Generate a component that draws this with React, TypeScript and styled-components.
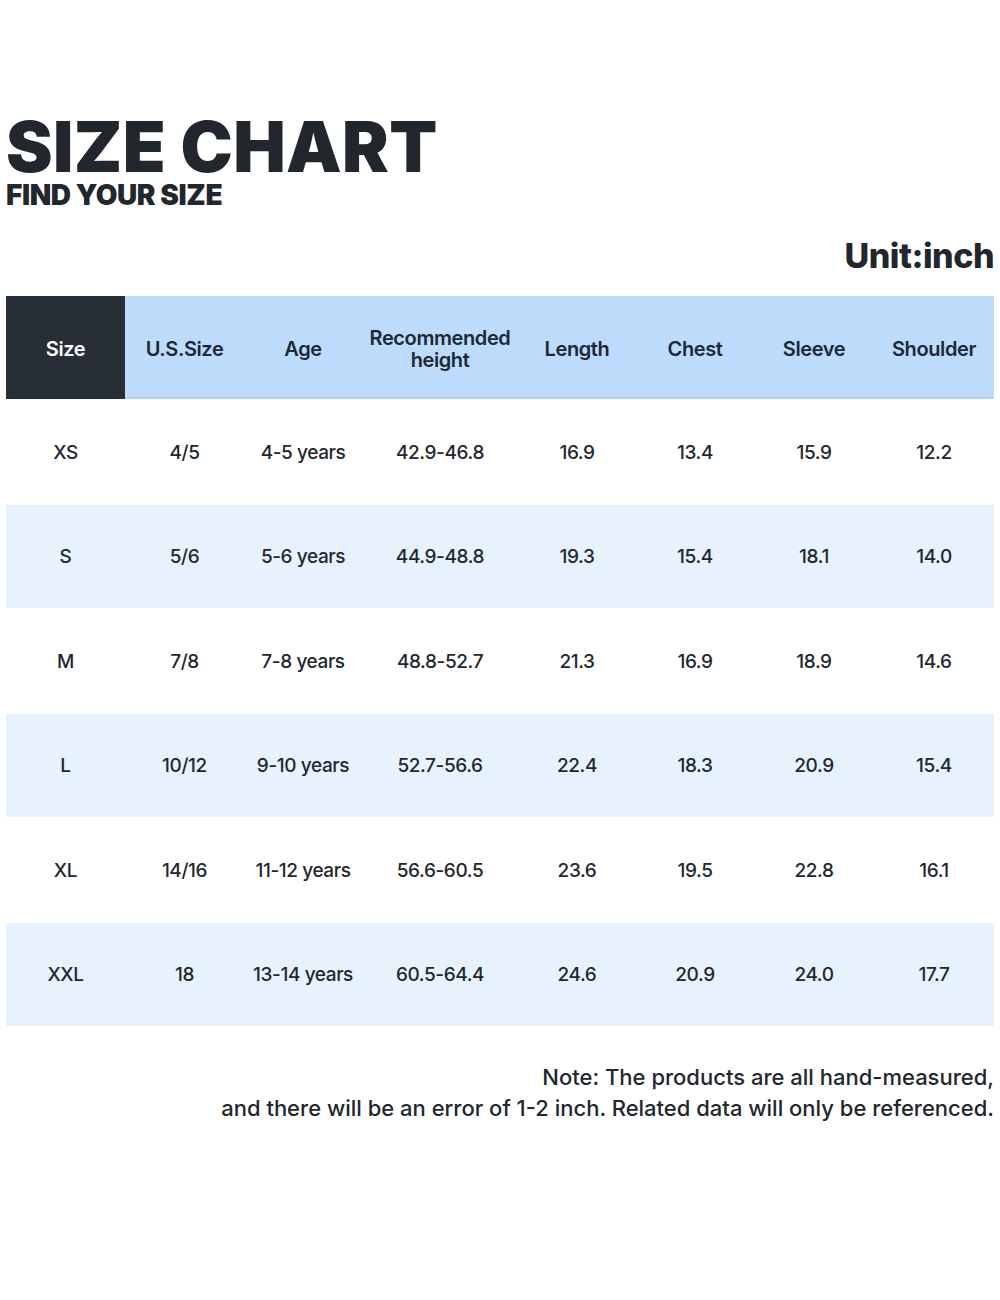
import React from "react";
import styled, { createGlobalStyle } from "styled-components";

const Global = createGlobalStyle`
  html, body { margin: 0; padding: 0; background: #ffffff; }
  body { font-family: Inter, "Noto Sans", sans-serif; color: #22272e; }
`;

const Page = styled.div`
  width: 1000px;
  height: 1300px;
  box-sizing: border-box;
  padding: 115px 6px 0 6px;
  display: flex;
  flex-direction: column;
`;

const Title = styled.h1`
  margin: 0 0 2px 0;
  font-family: Inter, sans-serif;
  font-weight: 900;
  font-size: 70px;
  line-height: 64px;
  letter-spacing: 0.4px;
  color: #22272e;
`;

const Subtitle = styled.h2`
  margin: 0;
  font-family: Inter, sans-serif;
  font-weight: 900;
  font-size: 28px;
  line-height: 28px;
  letter-spacing: -0.4px;
  color: #22272e;
`;

const Unit = styled.div`
  align-self: flex-end;
  margin-top: 27px;
  font-family: Inter, sans-serif;
  font-weight: 800;
  font-size: 34px;
  line-height: 40px;
  letter-spacing: -0.5px;
  color: #22272e;
`;

const Table = styled.div`
  margin-top: 20px;
  display: grid;
  grid-template-columns: 119px 119px 118px 156px 118px 118px 120px 120px;
`;

const HeadCell = styled.div<{ $dark?: boolean }>`
  height: 103px;
  padding-top: 4px;
  display: flex;
  align-items: center;
  justify-content: center;
  text-align: center;
  font-weight: 600;
  font-size: 20px;
  line-height: 22px;
  letter-spacing: -0.4px;
  white-space: pre-line;
  background: ${(p) => (p.$dark ? "#272e36" : "#bddcfb")};
  color: ${(p) => (p.$dark ? "#ffffff" : "#1c2838")};
  border-bottom: 2px solid ${(p) => (p.$dark ? "#272e36" : "#b3d3f3")};
  box-sizing: border-box;
`;

const Cell = styled.div<{ $alt: boolean; $h: number }>`
  height: ${(p) => p.$h}px;
  display: flex;
  align-items: center;
  justify-content: center;
  font-weight: 550;
  font-size: 19px;
  letter-spacing: -0.4px;
  color: #22272e;
  background: ${(p) => (p.$alt ? "#e8f2fd" : "#ffffff")};
`;

const Note = styled.div`
  margin-top: 36px;
  text-align: right;
  font-weight: 500;
  font-size: 22px;
  line-height: 31px;
  letter-spacing: 0px;
  color: #22272e;
`;

const headers = ["U.S.Size", "Age", "Recommended\nheight", "Length", "Chest", "Sleeve", "Shoulder"];

const rows = [
  ["XS", "4/5", "4-5 years", "42.9-46.8", "16.9", "13.4", "15.9", "12.2"],
  ["S", "5/6", "5-6 years", "44.9-48.8", "19.3", "15.4", "18.1", "14.0"],
  ["M", "7/8", "7-8 years", "48.8-52.7", "21.3", "16.9", "18.9", "14.6"],
  ["L", "10/12", "9-10 years", "52.7-56.6", "22.4", "18.3", "20.9", "15.4"],
  ["XL", "14/16", "11-12 years", "56.6-60.5", "23.6", "19.5", "22.8", "16.1"],
  ["XXL", "18", "13-14 years", "60.5-64.4", "24.6", "20.9", "24.0", "17.7"],
];

export default function App() {
  return (
    <>
      <Global />
      <Page>
        <Title>SIZE CHART</Title>
        <Subtitle>FIND YOUR SIZE</Subtitle>
        <Unit>Unit:inch</Unit>
        <Table>
          <HeadCell $dark>Size</HeadCell>
          {headers.map((h) => (
            <HeadCell key={h}>{h}</HeadCell>
          ))}
          {rows.map((r, i) =>
            r.map((v, j) => (
              <Cell key={`${i}-${j}`} $alt={i % 2 === 1} $h={i % 2 === 0 ? 106 : 103}>
                {v}
              </Cell>
            ))
          )}
        </Table>
        <Note>
          Note: The products are all hand-measured,
          <br />
          and there will be an error of 1-2 inch. Related data will only be referenced.
        </Note>
      </Page>
    </>
  );
}
